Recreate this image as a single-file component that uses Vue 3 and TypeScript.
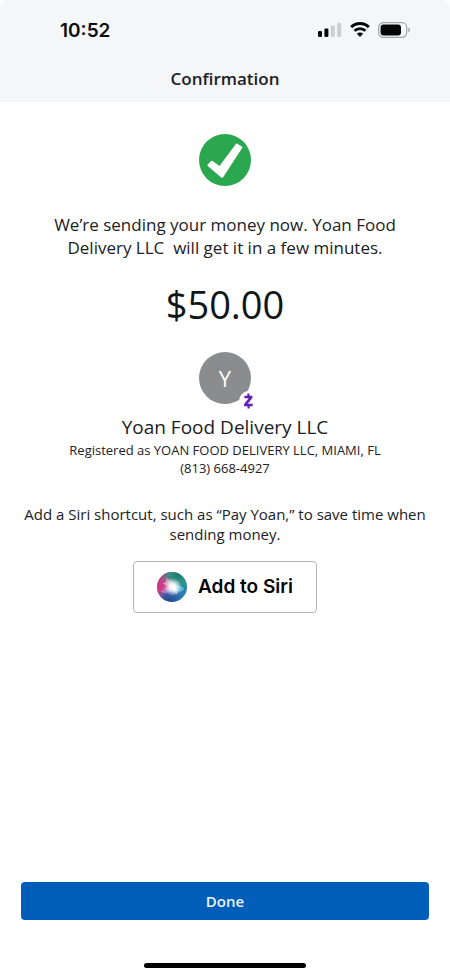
<script setup lang="ts">
interface Payee {
  name: string
  initial: string
  registeredAs: string
  phone: string
}

const payee: Payee = {
  name: 'Yoan Food Delivery LLC',
  initial: 'Y',
  registeredAs: 'YOAN FOOD DELIVERY LLC, MIAMI, FL',
  phone: '(813) 668-4927',
}
const amount = '$50.00'
const time = '10:52'
</script>

<template>
  <div class="screen">
    <header class="top">
      <div class="status">
        <span class="time">{{ time }}</span>
        <div class="indicators">
          <svg width="24" height="16" viewBox="0 0 24 16" aria-hidden="true">
            <rect x="0" y="9" width="4" height="6" rx="1.2" fill="#050505" />
            <rect x="6.4" y="6.5" width="4" height="8.5" rx="1.2" fill="#050505" />
            <rect x="12.8" y="3.6" width="4" height="11.4" rx="1.2" fill="#cdced0" />
            <rect x="19.2" y="0.8" width="4" height="14.2" rx="1.2" fill="#cdced0" />
          </svg>
          <svg width="20" height="16" viewBox="0 0 20 16" aria-hidden="true">
            <path d="M1.2 5.1a12.6 12.6 0 0 1 17.6 0" fill="none" stroke="#050505" stroke-width="2.9" />
            <path d="M4.5 8.8a7.9 7.9 0 0 1 11 0" fill="none" stroke="#050505" stroke-width="2.8" />
            <path d="M10 14.9L6.9 11.7a4.4 4.4 0 0 1 6.2 0z" fill="#050505" />
          </svg>
          <svg width="33" height="16" viewBox="0 0 33 16" aria-hidden="true">
            <rect x="0.7" y="0.7" width="28" height="14.6" rx="4.6" fill="none" stroke="#a3a4a6" stroke-width="1.2" />
            <rect x="2.6" y="2.6" width="20.4" height="10.8" rx="3" fill="#050505" />
            <path d="M30.4 5.6c2.3.8 2.3 4 0 4.8z" fill="#a3a4a6" />
          </svg>
        </div>
      </div>
      <h1 class="title">Confirmation</h1>
    </header>

    <main class="content">
      <svg width="52" height="52" viewBox="0 0 52 52" role="img" aria-label="Sent">
        <circle cx="26" cy="26" r="26" fill="#2ba84f" />
        <path
          d="M8.8 30.6l3-3.4c.6-.6 1.1-.7 1.8-.2l6.9 5.1L36.7 10.2c.5-.7 1-.8 1.7-.4l4.3 2.6c.7.4.9 1 .4 1.7L24.3 43.1c-.6.9-1.3 1-2.1.4L9 32.300c-.7-.6-.8-1.1-.2-1.700z"
          fill="#fff"
        />
      </svg>

      <p class="message">We’re sending your money now. {{ payee.name }}&nbsp; will get it in a few minutes.</p>
      <p class="amount">{{ amount }}</p>

      <div class="avatar">
        <span>{{ payee.initial }}</span>
        <svg class="badge" width="20" height="20" viewBox="0 0 20 20" role="img" aria-label="Zelle">
          <circle cx="10" cy="10" r="10" fill="#fff" />
          <path
            d="M5.4 4.7h8v2.3L8.8 12.700h4.900v2.500H5.100v-2.300l4.600-5.700H5.400zM8.300 2.400h2.200v2.900H8.300zM8.500 14.600h2.200v2.900H8.500z"
            fill="#6320b8"
          />
        </svg>
      </div>
      <h2 class="name">{{ payee.name }}</h2>
      <p class="detail">Registered as {{ payee.registeredAs }}</p>
      <p class="detail">{{ payee.phone }}</p>

      <p class="hint">Add a Siri shortcut, such as “Pay Yoan,” to save time when sending money.</p>
      <button type="button" class="siri">
        <svg width="30" height="30" viewBox="0 0 30 30" aria-hidden="true">
          <defs>
            <linearGradient id="orb" x1="0" y1="0.2" x2="1" y2="0.8">
              <stop offset="0" stop-color="#8d3568" />
              <stop offset="0.3" stop-color="#b04a91" />
              <stop offset="0.6" stop-color="#3f7cac" />
              <stop offset="1" stop-color="#1c83b7" />
            </linearGradient>
            <radialGradient id="teal" cx="0.68" cy="0.1" r="0.6">
              <stop offset="0" stop-color="#157d69" />
              <stop offset="0.5" stop-color="#2a9886" stop-opacity="0.85" />
              <stop offset="1" stop-color="#2a9886" stop-opacity="0" />
            </radialGradient>
            <radialGradient id="pink" cx="0.1" cy="0.5" r="0.45">
              <stop offset="0" stop-color="#d92f7d" />
              <stop offset="1" stop-color="#e65aa6" stop-opacity="0" />
            </radialGradient>
            <radialGradient id="navy" cx="0.4" cy="1" r="0.5">
              <stop offset="0" stop-color="#233f88" />
              <stop offset="0.5" stop-color="#2c5aa4" stop-opacity="0.85" />
              <stop offset="1" stop-color="#3658a4" stop-opacity="0" />
            </radialGradient>
            <radialGradient id="glow" cx="0.53" cy="0.5" r="0.3">
              <stop offset="0" stop-color="#fff" />
              <stop offset="0.35" stop-color="#fff" stop-opacity="0.9" />
              <stop offset="1" stop-color="#fff" stop-opacity="0" />
            </radialGradient>
          </defs>
          <circle cx="15" cy="15" r="15" fill="url(#orb)" />
          <circle cx="15" cy="15" r="15" fill="url(#teal)" />
          <circle cx="15" cy="15" r="15" fill="url(#pink)" />
          <circle cx="15" cy="15" r="15" fill="url(#navy)" />
          <path d="M9 6c4 1 7 4 8 9-4-1-8-1-12-4 3 0 5-2 4-5z" fill="#f6c3d4" opacity="0.55" />
          <path d="M15 15c4-3 11-1 12 2-2 4-8 4-12-2z" fill="#66c4ee" opacity="0.75" />
          <path d="M17 14c3 3 4 6 3 8-3-1-5-4-5-7z" fill="#d4effb" opacity="0.6" />
          <path d="M16 15c-2 5-7 8-12 5 1-4 7-6 12-5z" fill="#d996d2" opacity="0.5" />
          <circle cx="15" cy="15" r="15" fill="url(#glow)" />
        </svg>
        <span>Add to Siri</span>
      </button>
    </main>

    <footer class="bottom">
      <button type="button" class="done">Done</button>
      <div class="home"></div>
    </footer>
  </div>
</template>

<style>
body {
  margin: 0;
  background: #fff;
}
</style>

<style scoped>
.screen {
  display: flex;
  flex-direction: column;
  min-height: 100vh;
  font-family: 'Open Sans', 'Noto Sans', sans-serif;
  color: #1b2126;
  text-align: center;
}
h1,
h2,
p {
  margin: 0;
  font-weight: 400;
}
svg {
  display: block;
  flex: none;
}
.top {
  padding: 18px 0 10px;
  border-radius: 8px 8px 0 0;
  background: #f5f6f8;
}
.status {
  display: flex;
  align-items: center;
  justify-content: space-between;
  height: 24px;
  padding: 0 39px 0 60px;
}
.time {
  font-family: Inter, sans-serif;
  font-size: 19px;
  font-weight: 600;
  color: #0a0c0e;
}
.indicators {
  display: flex;
  align-items: center;
  gap: 8px;
}
h1.title {
  margin-top: 24px;
  font-size: 17px;
  font-weight: 600;
  line-height: 26px;
}
.content {
  display: flex;
  flex: 1;
  flex-direction: column;
  align-items: center;
  padding: 32px 24px;
}
.message {
  max-width: 352px;
  margin-top: 27px;
  font-size: 17px;
  line-height: 23px;
}
.amount {
  margin-top: 18px;
  font-size: 38px;
  line-height: 54px;
  color: #101519;
}
.avatar {
  position: relative;
  width: 52px;
  height: 52px;
  margin-top: 21px;
  border-radius: 50%;
  background: #8b8c8e;
  color: #fff;
  font-size: 22px;
  line-height: 52px;
}
.badge {
  position: absolute;
  right: -8px;
  bottom: -7px;
}
.name {
  margin-top: 10px;
  font-size: 19px;
  line-height: 27px;
}
.detail {
  font-size: 13px;
  line-height: 18px;
}
.hint {
  margin-top: 27px;
  font-size: 15px;
  line-height: 20px;
}
.siri {
  display: flex;
  align-items: center;
  gap: 11px;
  margin-top: 17px;
  padding: 10px 23px;
  border: 1px solid #b5b5b5;
  border-radius: 4px;
  background: #fff;
  color: #050505;
  font-family: Inter, sans-serif;
  font-size: 19px;
  font-weight: 600;
  line-height: 30px;
}
.bottom {
  display: flex;
  flex-direction: column;
  align-items: center;
  gap: 43px;
  padding: 0 21px 8px;
}
.done {
  width: 100%;
  padding: 8px;
  border: 0;
  border-radius: 4px;
  background: #005eb8;
  color: #e9f5fb;
  font-family: inherit;
  font-size: 15px;
  font-weight: 600;
  line-height: 22px;
}
.home {
  width: 162px;
  height: 5px;
  border-radius: 3px;
  background: #000;
}
</style>
